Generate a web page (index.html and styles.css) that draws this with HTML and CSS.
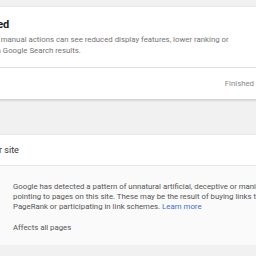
FILE: index.html
```html
<!DOCTYPE html>
<html lang="en">
<head>
    <meta charset="UTF-8">
    <meta name="viewport" content="width=device-width, initial-scale=1.0">
    <title>Manual actions</title>
    <link rel="stylesheet" href="styles.css">
</head>
<body>
    <div class="page">
        <div class="card summary">
            <div class="summary-body">
                <h2 class="summary-title">Enforced</h2>
                <p class="summary-text">Sites with manual actions can see reduced display features, lower ranking or removal in Google Search results.</p>
            </div>
            <div class="summary-footer">
                <span class="status">Finished</span>
            </div>
        </div>

        <div class="card issue">
            <div class="issue-header">
                <h3 class="issue-title">Unnatural links to your site</h3>
            </div>
            <div class="issue-panel">
                <p class="issue-text">Google has detected a pattern of unnatural artificial, deceptive or manipulative links pointing to pages on this site. These may be the result of buying links that pass PageRank or participating in link schemes. <a href="#" class="learn">Learn more</a></p>
                <p class="issue-scope">Affects all pages</p>
            </div>
        </div>
    </div>
</body>
</html>
```

FILE: styles.css
```css
* {
    margin: 0;
    padding: 0;
    box-sizing: border-box;
}

body {
    font-family: Roboto, "Liberation Sans", Arial, sans-serif;
    background: #f1f1f1;
    color: #333;
    overflow: hidden;
}

.page {
    width: 460px;
    margin-left: -120px;
    padding-top: 7px;
    display: flex;
    flex-direction: column;
    gap: 36px;
}

.card {
    background: #fff;
    box-shadow: 0 1px 3px rgba(0, 0, 0, 0.2);
}

.summary-body {
    padding: 11px 16px 11.5px 85px;
}

.summary-title {
    font-size: 11px;
    line-height: 14px;
    font-weight: 700;
    color: #202124;
}

.summary-text {
    margin-top: 1.5px;
    font-size: 7.8px;
    line-height: 11px;
    color: #757575;
    width: 272px;
}

.summary-footer {
    border-top: 1px solid #e0e0e0;
    height: 32px;
    display: flex;
    align-items: center;
    justify-content: flex-end;
    padding-right: 86px;
}

.status {
    font-size: 7.8px;
    color: #888;
}

.issue-header {
    height: 31px;
    display: flex;
    align-items: center;
    padding-left: 33px;
    border-bottom: 1px solid #e6e6e6;
}

.issue-title {
    font-size: 9px;
    font-weight: 400;
    color: #333;
}

.issue-panel {
    background: #fafafa;
    padding: 16px 16px 12px 133px;
}

.issue-text {
    font-size: 7.8px;
    line-height: 10px;
    color: #555;
    width: 300px;
}

.learn {
    color: #3b6fc9;
    text-decoration: none;
}

.issue-scope {
    margin-top: 11px;
    font-size: 7.8px;
    line-height: 10px;
    color: #555;
}
```
